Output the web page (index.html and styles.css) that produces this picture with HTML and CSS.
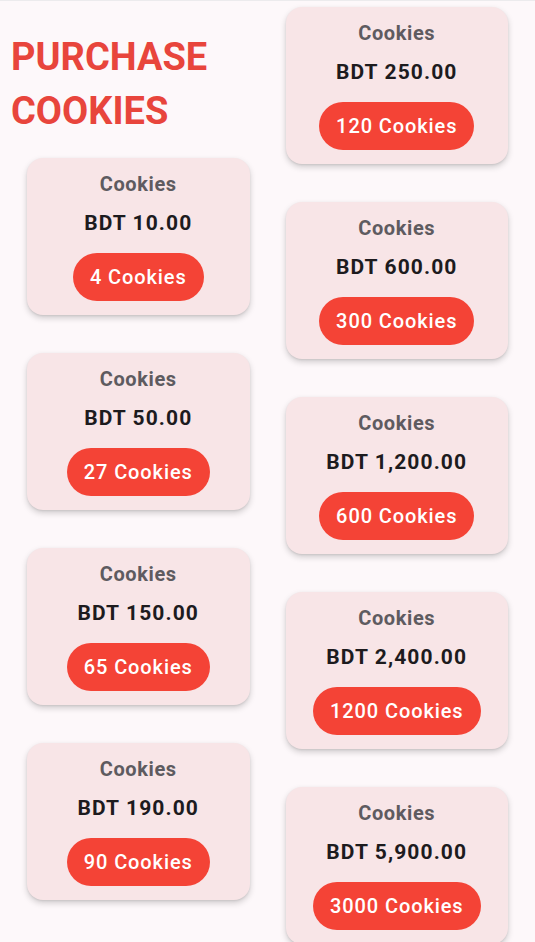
FILE: index.html
```html
<!DOCTYPE html>
<html>
<head>
<meta charset="utf-8">
<link rel="stylesheet" href="styles.css">
</head>
<body>
<div class="page">
  <div class="col col-left">
    <h1 class="title">PURCHASE<br>COOKIES</h1>
    <div class="card"><div class="label">Cookies</div><div class="price">BDT 10.00</div><button class="buy">4 Cookies</button></div>
    <div class="card"><div class="label">Cookies</div><div class="price">BDT 50.00</div><button class="buy">27 Cookies</button></div>
    <div class="card"><div class="label">Cookies</div><div class="price">BDT 150.00</div><button class="buy">65 Cookies</button></div>
    <div class="card"><div class="label">Cookies</div><div class="price">BDT 190.00</div><button class="buy">90 Cookies</button></div>
  </div>
  <div class="col col-right">
    <div class="card"><div class="label">Cookies</div><div class="price">BDT 250.00</div><button class="buy">120 Cookies</button></div>
    <div class="card"><div class="label">Cookies</div><div class="price">BDT 600.00</div><button class="buy">300 Cookies</button></div>
    <div class="card"><div class="label">Cookies</div><div class="price">BDT 1,200.00</div><button class="buy">600 Cookies</button></div>
    <div class="card"><div class="label">Cookies</div><div class="price">BDT 2,400.00</div><button class="buy">1200 Cookies</button></div>
    <div class="card"><div class="label">Cookies</div><div class="price">BDT 5,900.00</div><button class="buy">3000 Cookies</button></div>
  </div>
</div>
</body>
</html>
```
FILE: styles.css
```css
html, body {
  margin: 0;
  padding: 0;
  background: #fdf8fa;
  font-family: Roboto, "Noto Sans", sans-serif;
}
body {
  height: 942px;
  overflow: hidden;
  border-top: 1px solid #ecebed;
  box-sizing: border-box;
}
.page {
  display: grid;
  grid-template-columns: 1fr 1fr;
  column-gap: 36px;
  padding: 0 27px;
  align-items: start;
}
.col {
  display: flex;
  flex-direction: column;
  gap: 38px;
}
.col-left {
  padding-top: 29px;
}
.col-right {
  padding-top: 6px;
}
.title {
  margin: 0 0 -18px -16px;
  font-size: 38px;
  line-height: 54px;
  font-weight: 700;
  color: #e8453c;
  letter-spacing: 0;
}
.card {
  background: #f8e5e7;
  border-radius: 16px;
  box-shadow: 0 3px 6px rgba(0, 0, 0, 0.18), 0 1px 2px rgba(0, 0, 0, 0.08);
  padding: 14px 8px;
  display: flex;
  flex-direction: column;
  align-items: center;
  height: 157px;
  box-sizing: border-box;
}
.label {
  font-size: 20px;
  line-height: 24px;
  font-weight: 700;
  letter-spacing: 0.6px;
  color: #5e5b60;
}
.price {
  margin-top: 15px;
  font-size: 21px;
  line-height: 24px;
  font-weight: 700;
  letter-spacing: 1.1px;
  color: #1d1b1e;
}
.buy {
  margin-top: 18px;
  height: 48px;
  border: 0;
  border-radius: 24px;
  background: #f44336;
  color: #ffffff;
  font-family: Roboto, "Noto Sans", sans-serif;
  font-size: 20px;
  line-height: 24px;
  font-weight: 500;
  letter-spacing: 0.9px;
  padding: 0 17px;
}
```
